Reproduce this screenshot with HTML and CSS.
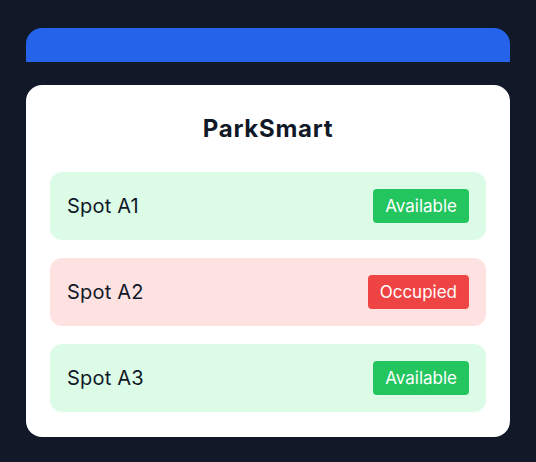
FILE: index.html
```html
<!DOCTYPE html>
<html>
<head>
<meta charset="utf-8">
<link rel="stylesheet" href="styles.css">
</head>
<body>
<div class="page">
  <div class="topbar"></div>
  <div class="card">
    <h1 class="title">ParkSmart</h1>
    <div class="list">
      <div class="spot spot-free">
        <span class="spot-name">Spot A1</span>
        <span class="badge badge-free">Available</span>
      </div>
      <div class="spot spot-busy">
        <span class="spot-name">Spot A2</span>
        <span class="badge badge-busy">Occupied</span>
      </div>
      <div class="spot spot-free">
        <span class="spot-name">Spot A3</span>
        <span class="badge badge-free">Available</span>
      </div>
    </div>
  </div>
</div>
</body>
</html>
```
FILE: styles.css
```css
* { box-sizing: border-box; }
html, body { margin: 0; padding: 0; }
body {
  background: #111827;
  font-family: Inter, "Noto Sans", sans-serif;
  color: #111827;
  width: 536px;
  height: 462px;
  overflow: hidden;
}
.page {
  padding: 28px 26px;
  display: flex;
  flex-direction: column;
  gap: 23px;
}
.topbar {
  height: 34px;
  background: #2563eb;
  border-radius: 16px 16px 0 0;
}
.card {
  background: #ffffff;
  border-radius: 16px;
  padding: 24px 24px 25px;
  display: flex;
  flex-direction: column;
}
.title {
  margin: 0 0 23px 0;
  font-size: 24px;
  line-height: 40px;
  font-weight: 700;
  letter-spacing: 0.03em;
  text-align: center;
}
.list {
  display: flex;
  flex-direction: column;
  gap: 18px;
}
.spot {
  height: 68px;
  border-radius: 12px;
  padding: 0 17px;
  display: flex;
  align-items: center;
  justify-content: space-between;
}
.spot-free { background: #dcfce7; }
.spot-busy { background: #fee2e2; }
.spot-name {
  font-size: 20px;
  font-weight: 400;
  letter-spacing: 0.01em;
}
.badge {
  color: #ffffff;
  font-size: 17px;
  line-height: 24px;
  padding: 5px 12px;
  border-radius: 4px;
}
.badge-free { background: #22c55e; }
.badge-busy { background: #ef4444; }
```
